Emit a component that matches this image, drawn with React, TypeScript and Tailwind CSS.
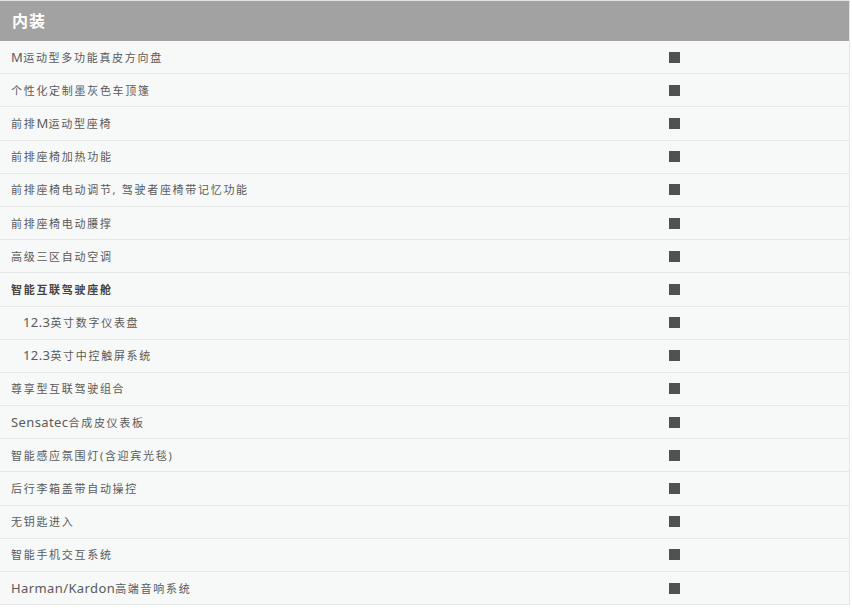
const rows: { label: string; bold?: boolean; sub?: boolean }[] = [
  { label: "M运动型多功能真皮方向盘" },
  { label: "个性化定制墨灰色车顶篷" },
  { label: "前排M运动型座椅" },
  { label: "前排座椅加热功能" },
  { label: "前排座椅电动调节, 驾驶者座椅带记忆功能" },
  { label: "前排座椅电动腰撑" },
  { label: "高级三区自动空调" },
  { label: "智能互联驾驶座舱", bold: true },
  { label: "12.3英寸数字仪表盘", sub: true },
  { label: "12.3英寸中控触屏系统", sub: true },
  { label: "尊享型互联驾驶组合" },
  { label: "Sensatec合成皮仪表板" },
  { label: "智能感应氛围灯(含迎宾光毯)" },
  { label: "后行李箱盖带自动操控" },
  { label: "无钥匙进入" },
  { label: "智能手机交互系统" },
  { label: "Harman/Kardon高端音响系统" },
];

// Latin runs are set a touch larger than the CJK runs, as in the brochure
function Label({ text }: { text: string }) {
  const parts = text.split(/([A-Za-z0-9./]+)/).filter(Boolean);
  return (
    <>
      {parts.map((p, i) =>
        /^[A-Za-z0-9./]+$/.test(p) ? (
          <span key={i} className="text-[13px] tracking-[0.4px]">
            {p}
          </span>
        ) : (
          <span key={i}>{p}</span>
        )
      )}
    </>
  );
}

export default function App() {
  return (
    <div
      className="w-[852px] h-[608px] bg-white overflow-hidden"
      style={{ fontFamily: '"Noto Sans", "Noto Sans CJK SC", sans-serif' }}
    >
      <div className="w-[850px] border-t border-r border-[#e4e5e5] bg-[#f7f8f8]">
        {/* Header */}
        <div className="h-[40px] bg-[#a1a2a1] flex items-center pl-[12px]">
          <span className="text-white text-[16px] font-bold tracking-[1px]">内装</span>
        </div>

        {/* Rows */}
        {rows.map((r) => (
          <div
            key={r.label}
            className="h-[33.2px] flex items-center border-b border-[#e6e7e7]"
          >
            <div
              className={
                "w-[669px] text-[11px] leading-none tracking-[1.7px] " +
                (r.sub ? "pl-[23px] " : "pl-[11px] ") +
                (r.bold ? "font-bold text-[#444]" : "text-[#5a5a5a]")
              }
            >
              <Label text={r.label} />
            </div>
            <div className="w-[11px] h-[11px] bg-[#525152]" />
          </div>
        ))}
      </div>
    </div>
  );
}
